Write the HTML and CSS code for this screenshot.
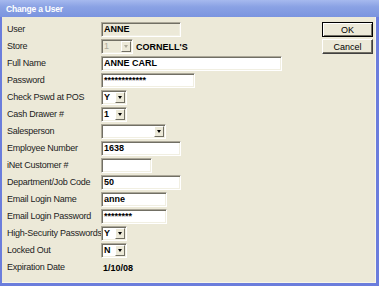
FILE: index.html
```html
<html>
  <head>
    <title>Change a User</title>
    <link rel="stylesheet" href="styles.css">
  </head>
  <body>
    <div class="window">
      <div class="titlebar">Change a User</div>
      <div class="client">
        <div class="fields">
          <label>User</label>
          <div class="field disabled w80">ANNE</div>

          <label>Store</label>
          <div class="store">
            <div class="field combo disabled w32"><span class="value">1</span><span class="drop"></span></div>
            <span class="store-name">CORNELL'S</span>
          </div>

          <label>Full Name</label>
          <div class="field w181">ANNE CARL</div>

          <label>Password</label>
          <div class="field w94">************</div>

          <label>Check Pswd at POS</label>
          <div class="field combo w26"><span class="value">Y</span><span class="drop"></span></div>

          <label>Cash Drawer #</label>
          <div class="field combo w26"><span class="value">1</span><span class="drop"></span></div>

          <label>Salesperson</label>
          <div class="field combo w65"><span class="value"></span><span class="drop"></span></div>

          <label>Employee Number</label>
          <div class="field w80">1638</div>

          <label>iNet Customer #</label>
          <div class="field w51"></div>

          <label>Department/Job Code</label>
          <div class="field w80">50</div>

          <label>Email Login Name</label>
          <div class="field w66">anne</div>

          <label>Email Login Password</label>
          <div class="field w66">********</div>

          <label>High-Security Passwords</label>
          <div class="field combo w26"><span class="value">Y</span><span class="drop"></span></div>

          <label>Locked Out</label>
          <div class="field combo w26"><span class="value">N</span><span class="drop"></span></div>

          <label>Expiration Date</label>
          <div class="static">1/10/08</div>
        </div>
        <div class="buttons">
          <button class="default">OK</button>
          <button>Cancel</button>
        </div>
      </div>
    </div>
  </body>
</html>
```

FILE: styles.css
```css
:root {
  --face: #ece9d8;
  --frame: #6b7ddc;
  --shadow: #aca899;
  --dark: #716f64;
  --light: #fff;
}

body {
  margin: 0;
  font-family: "Liberation Sans", Arial, sans-serif;
  font-size: 9px;
  color: #000;
}

.window {
  width: 379px;
  height: 286px;
  box-sizing: border-box;
  background-color: var(--frame);
  display: flex;
  flex-direction: column;
  padding: 0 3px 3px 2px;
}

.titlebar {
  height: 17px;
  margin: 0 -3px 0 -2px;
  padding-left: 6px;
  line-height: 18px;
  color: #fff;
  font-weight: bold;
  font-size: 8.5px;
  letter-spacing: -0.2px;
  background: linear-gradient(#a6b9ee, #8aa2e4 40%, #7b94df);
}

.client {
  flex: 1;
  display: flex;
  background-color: var(--face);
  box-shadow: inset -1px -1px 0 #f7f5ea;
}

/* label column + control column */
.fields {
  display: grid;
  grid-template-columns: 94px auto;
  grid-auto-rows: 15px;
  row-gap: 2px;
  align-items: center;
  padding: 5px 0 0 5px;
}
.fields label {
  line-height: 15px;
  white-space: nowrap;
  letter-spacing: -0.25px;
  color: #222;
}

.field {
  justify-self: start;
  box-sizing: border-box;
  height: 15px;
  background-color: #fff;
  border-style: solid;
  border-width: 1px;
  border-color: var(--shadow) var(--light) var(--light) var(--shadow);
  box-shadow: inset 1px 1px 0 var(--dark), inset -1px -1px 0 #f1efe2;
  padding: 0 0 0 2px;
  font-weight: bold;
  line-height: 13px;
  white-space: nowrap;
  overflow: hidden;
}
.field.disabled {
  background-color: var(--face);
}

.w26 { width: 26px; }
.w32 { width: 32px; }
.w51 { width: 51px; }
.w65 { width: 65px; }
.w66 { width: 66px; }
.w80 { width: 80px; }
.w94 { width: 94px; }
.w181 { width: 181px; }

.combo {
  display: flex;
  padding: 1px 1px 1px 2px;
}
.combo .value {
  flex: 1;
  line-height: 11px;
}
.combo.disabled .value {
  color: #aca899;
  font-weight: normal;
}
.combo .drop {
  width: 10px;
  height: 11px;
  box-sizing: border-box;
  background-color: var(--face);
  border: 1px solid;
  border-color: var(--light) var(--dark) var(--dark) var(--light);
  display: flex;
  align-items: center;
  justify-content: center;
}
.combo .drop::after {
  content: "";
  border-top: 3px solid #000;
  border-left: 2.5px solid transparent;
  border-right: 2.5px solid transparent;
}
.combo.disabled .drop::after {
  border-top-color: #aca899;
}

.store {
  display: flex;
  align-items: center;
  gap: 3px;
}
.store-name {
  font-weight: bold;
}

.static {
  padding-left: 2px;
  font-weight: bold;
}

.buttons {
  margin-left: auto;
  padding: 5px 3px 0 0;
  display: flex;
  flex-direction: column;
  gap: 2px;
}
.buttons button {
  width: 51px;
  height: 15px;
  padding: 0;
  font-family: inherit;
  font-size: 9px;
  color: #000;
  background-color: var(--face);
  border: 1px solid;
  border-color: var(--light) #404040 #404040 var(--light);
  box-shadow: inset -1px -1px 0 var(--dark);
}
.buttons button.default {
  border-color: #000;
  box-shadow: inset 1px 1px 0 var(--light), inset -1px -1px 0 var(--dark);
}
```
